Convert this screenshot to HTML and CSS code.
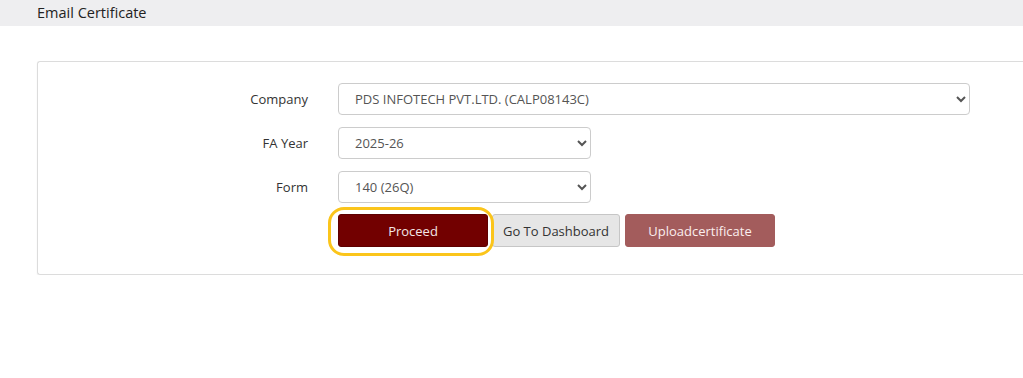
FILE: index.html
```html
<!DOCTYPE html>
<html lang="en">
<head>
    <meta charset="UTF-8">
    <meta name="viewport" content="width=device-width, initial-scale=1.0">
    <title>Email Certificate</title>
    <link rel="stylesheet" href="styles.css">
</head>
<body>
    <div class="page-title">Email Certificate</div>

    <div class="panel">
        <div class="form-row">
            <label class="form-label" for="company">Company</label>
            <select id="company" class="form-select wide">
                <option>PDS INFOTECH PVT.LTD. (CALP08143C)</option>
            </select>
        </div>
        <div class="form-row">
            <label class="form-label" for="fa-year">FA Year</label>
            <select id="fa-year" class="form-select">
                <option>2025-26</option>
            </select>
        </div>
        <div class="form-row">
            <label class="form-label" for="form">Form</label>
            <select id="form" class="form-select">
                <option>140 (26Q)</option>
            </select>
        </div>
        <div class="form-row">
            <span></span>
            <div class="actions">
                <span class="highlight">
                    <button class="btn btn-proceed">Proceed</button>
                </span>
                <button class="btn btn-default">Go To Dashboard</button>
                <button class="btn btn-upload">Uploadcertificate</button>
            </div>
        </div>
    </div>
</body>
</html>
```

FILE: styles.css
```css
body {
    margin: 0;
    font-family: "Open Sans", Arial, sans-serif;
    font-size: 13px;
    color: #333;
    background-color: #fff;
}
.page-title {
    height: 26px;
    line-height: 25px;
    padding-left: 37px;
    font-size: 14.5px;
    color: #222;
    background-color: #eeeef0;
}
.panel {
    margin: 35px 0 0 37px;
    padding: 21px 0 27px;
    border: 1px solid #dcdcdc;
    border-right: none;
    border-radius: 3px 0 0 3px;
    box-shadow: 0 1px 2px rgba(0,0,0,0.05);
}
.form-row {
    display: grid;
    grid-template-columns: 270px auto;
    column-gap: 30px;
    align-items: center;
    margin-bottom: 12px;
}
.form-row:last-child {
    margin-bottom: 0;
    margin-top: -1px;
}
.form-label {
    text-align: right;
    color: #333;
}
.form-select {
    width: 253px;
    height: 32px;
    padding: 0 10px 0 12px;
    font-family: "Open Sans", Arial, sans-serif;
    font-size: 13px;
    color: #555;
    background-color: #fff;
    border: 1px solid #ccc;
    border-radius: 4px;
}
.form-select.wide {
    width: 632px;
}
.actions {
    display: flex;
    gap: 5px;
    align-items: center;
}
.highlight {
    position: relative;
    display: inline-flex;
    margin-right: -1px;
}
.highlight::after {
    content: "";
    position: absolute;
    left: -10px;
    top: -7px;
    width: 160px;
    height: 43px;
    border: 3.5px solid #fbc51b;
    border-radius: 16px;
}
.btn {
    height: 33px;
    padding: 0;
    font-family: "Open Sans", Arial, sans-serif;
    font-size: 13px;
    white-space: nowrap;
    border-radius: 3px;
    cursor: pointer;
}
.btn-proceed {
    width: 150px;
    color: #f3e6e6;
    background-color: #720000;
    border: 1px solid #5e0000;
}
.btn-default {
    width: 128px;
    color: #333;
    background-color: #e6e6e6;
    border: 1px solid #c6c6c6;
}
.btn-upload {
    width: 150px;
    color: #fbeeee;
    background-color: #a35c5c;
    border: 1px solid #a35c5c;
}
```
